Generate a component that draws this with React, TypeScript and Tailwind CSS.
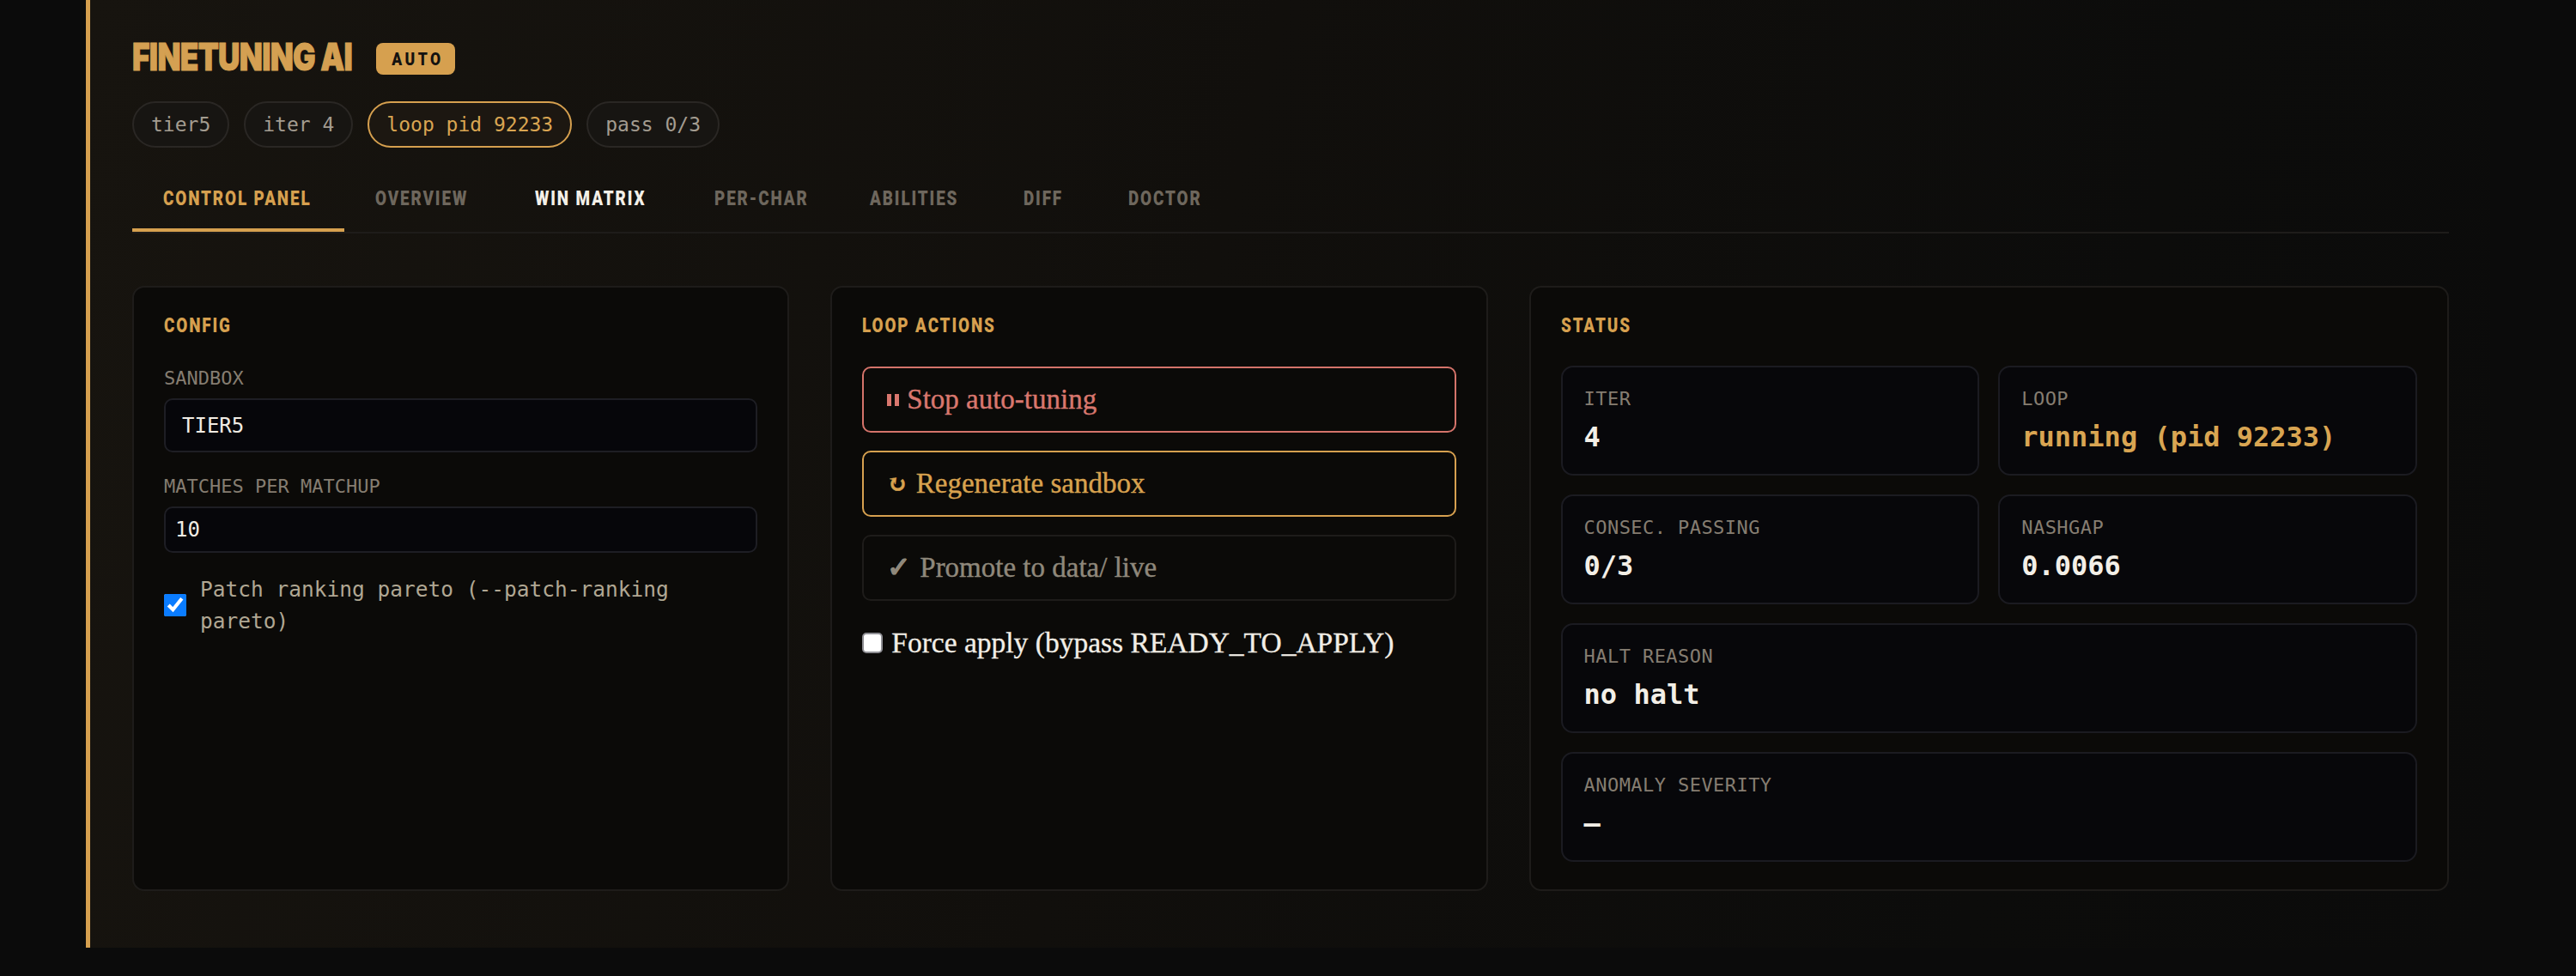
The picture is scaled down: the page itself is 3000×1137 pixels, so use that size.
import React from "react";

const COND = "[font-family:'Roboto','Liberation_Sans',sans-serif]";
const TITLE = "[font-family:'Inter','Roboto',sans-serif]";
const MONO = "[font-family:'DejaVu_Sans_Mono','Liberation_Mono',monospace]";
const SERIF = "[font-family:'Liberation_Serif','DejaVu_Serif',serif]";

const pills = [
  { label: "tier5", active: false },
  { label: "iter 4", active: false },
  { label: "loop pid 92233", active: true },
  { label: "pass 0/3", active: false },
];

const tabs = [
  { label: "CONTROL PANEL", w: "w-[175px]", cls: "text-[#d6a04f] border-[#d6a04f]" },
  { label: "OVERVIEW", w: "w-[114px]", cls: "text-[#6e675d] border-transparent" },
  { label: "WIN MATRIX", w: "w-[137px]", cls: "text-[#f4f0e8] border-transparent" },
  { label: "PER-CHAR", w: "w-[109px]", cls: "text-[#6e675d] border-transparent" },
  { label: "ABILITIES", w: "w-[107px]", cls: "text-[#6e675d] border-transparent" },
  { label: "DIFF", w: "w-[50px]", cls: "text-[#6e675d] border-transparent" },
  { label: "DOCTOR", w: "w-[89px]", cls: "text-[#6e675d] border-transparent" },
];

function CardHeading({ children }: { children: React.ReactNode }) {
  return (
    <div className={`${COND} text-[23px] leading-[26px] font-black text-[#d6a04f] uppercase`}>
      <span className="inline-block origin-left scale-x-[0.82] whitespace-nowrap tracking-[0.1em]">
        {children}
      </span>
    </div>
  );
}

function Tile({
  label,
  value,
  gold,
  wide,
}: {
  label: string;
  value: string;
  gold?: boolean;
  wide?: boolean;
}) {
  return (
    <div
      className={`${wide ? "col-span-2" : ""} rounded-[14px] border-2 border-[#1b1b21] bg-[#07070a] px-[25px] pt-[24px] pb-[23px]`}
    >
      <div className={`${MONO} text-[22px] leading-[26px] tracking-[0.02em] text-[#857d71]`}>{label}</div>
      <div
        className={`${MONO} mt-[11px] text-[32px] leading-[40px] font-bold ${gold ? "text-[#d9a552]" : "text-[#f3efe7]"}`}
      >
        {value}
      </div>
    </div>
  );
}

export default function App() {
  return (
    <div className="min-h-[1137px] w-full bg-[#0b0b0b]">
      <div className="mx-auto w-[2800px] border-l-[5px] border-[#d6a04f] bg-[linear-gradient(105deg,#17140f_0%,#110f0c_45%,#0c0c0b_80%,#0b0b0b_100%)] pl-[49px] pr-[48px] pt-[44px] pb-[66px]">
        {/* Title */}
        <div className="flex items-start">
          <h1
            className={`${TITLE} w-[258px] text-[44px] leading-[45px] font-black text-[#d4a052] [-webkit-text-stroke:1px_#d4a052]`}
          >
            <span className="inline-block origin-left scale-x-[0.8] whitespace-nowrap tracking-[-0.02em]">
              FINETUNING AI
            </span>
          </h1>
          <span
            className={`${COND} ml-[26px] mt-[6px] flex h-[37px] w-[92px] items-center justify-center rounded-[8px] bg-[#d6a04f] text-[20px] font-black text-[#141210]`}
          >
            <span className="inline-block scale-x-[0.88] tracking-[0.2em] mr-[-0.2em]">AUTO</span>
          </span>
        </div>

        {/* Pills */}
        <div className="mt-[29px] flex gap-[17px]">
          {pills.map((p) => (
            <span
              key={p.label}
              className={`${MONO} flex h-[54px] items-center rounded-full border-2 px-[20px] text-[23px] ${
                p.active
                  ? "border-[#d6a04f] bg-[#1c1711] text-[#d9a552]"
                  : "border-[#2a2724] bg-[#171512] text-[#a39c90]"
              }`}
            >
              {p.label}
            </span>
          ))}
        </div>

        {/* Tabs */}
        <div className="mt-[27px] flex border-b-2 border-[#1e1c1a]">
          {tabs.map((t) => (
            <div
              key={t.label}
              className={`${COND} border-b-4 px-[36px] pt-[20px] pb-[21px] text-[23px] leading-[26px] font-black ${t.cls}`}
            >
              <div className={`${t.w}`}>
                <span className="inline-block origin-left scale-x-[0.82] whitespace-nowrap tracking-[0.1em]">
                  {t.label}
                </span>
              </div>
            </div>
          ))}
        </div>

        {/* Cards */}
        <div className="mt-[61px] grid grid-cols-[1fr_1fr_1.4fr] gap-[48px]">
          {/* Config */}
          <div className="rounded-[14px] border-2 border-[#1e1c1a] bg-[#0b0a08] px-[35px] pt-[32px] pb-[32px]">
            <CardHeading>Config</CardHeading>
            <div className={`${MONO} mt-[35px] text-[22px] leading-[26px] text-[#857d71]`}>SANDBOX</div>
            <div
              className={`${MONO} mt-[10px] flex h-[63px] items-center rounded-[10px] border-2 border-[#1e1e24] bg-[#06060a] pl-[19px] text-[24px] text-[#f0ece4]`}
            >
              TIER5
            </div>
            <div className={`${MONO} mt-[27px] text-[22px] leading-[26px] text-[#857d71]`}>MATCHES PER MATCHUP</div>
            <div
              className={`${MONO} mt-[10px] flex h-[54px] items-center rounded-[10px] border-2 border-[#1e1e24] bg-[#06060a] pl-[11px] text-[24px] text-[#f0ece4]`}
            >
              10
            </div>
            <label className="mt-[24px] flex items-center gap-[16px]">
              <input
                type="checkbox"
                defaultChecked
                className="h-[26px] w-[26px] shrink-0 accent-[#0a7cff]"
              />
              <span className={`${MONO} text-[24.5px] leading-[37px] text-[#b0a793]`}>
                Patch ranking pareto (--patch-ranking pareto)
              </span>
            </label>
          </div>

          {/* Loop actions */}
          <div className="rounded-[14px] border-2 border-[#1e1c1a] bg-[#0b0a08] px-[35px] pt-[32px] pb-[32px]">
            <CardHeading>Loop actions</CardHeading>
            <div className="mt-[34px] flex flex-col gap-[21px]">
              <button
                className={`${SERIF} flex h-[77px] items-center rounded-[10px] border-2 border-[#d4736a] px-[27px] text-[33px] text-[#d9776e] [-webkit-text-stroke:0.4px_#d9776e]`}
              >
                <span className="mr-[9px] flex gap-[4px]">
                  <span className="block h-[14px] w-[5px] bg-[#d9776e]" />
                  <span className="block h-[14px] w-[5px] bg-[#d9776e]" />
                </span>
                Stop auto-tuning
              </button>
              <button
                className={`${SERIF} flex h-[77px] items-center rounded-[10px] border-2 border-[#d6a04f] px-[27px] text-[33px] text-[#d8a24f] [-webkit-text-stroke:0.4px_#d8a24f]`}
              >
                <span className="mr-[10px] text-[28px] font-bold">↻</span>
                Regenerate sandbox
              </button>
              <button
                className={`${SERIF} flex h-[77px] items-center rounded-[10px] border-2 border-[#1e1c1a] px-[27px] text-[33px] text-[#8f887b] [-webkit-text-stroke:0.4px_#8f887b]`}
              >
                <span className="mr-[10px] font-bold">✓</span>
                Promote to data/ live
              </button>
            </div>
            <label
              className={`${SERIF} mt-[30px] flex items-center gap-[10px] text-[33.5px] leading-[37px] text-[#f2eee6] [-webkit-text-stroke:0.3px_#f2eee6]`}
            >
              <input
                type="checkbox"
                className="h-[24px] w-[24px] shrink-0 appearance-none rounded-[5px] border-2 border-[#8e8e93] bg-white"
              />
              Force apply (bypass READY_TO_APPLY)
            </label>
          </div>

          {/* Status */}
          <div className="rounded-[14px] border-2 border-[#1e1c1a] bg-[#0b0a08] px-[35px] pt-[32px] pb-[32px]">
            <CardHeading>Status</CardHeading>
            <div className="mt-[33px] grid grid-cols-2 gap-[22px]">
              <Tile label="ITER" value="4" />
              <Tile label="LOOP" value="running (pid 92233)" gold />
              <Tile label="CONSEC. PASSING" value="0/3" />
              <Tile label="NASHGAP" value="0.0066" />
              <Tile label="HALT REASON" value="no halt" wide />
              <Tile label="ANOMALY SEVERITY" value="—" wide />
            </div>
          </div>
        </div>
      </div>
    </div>
  );
}
